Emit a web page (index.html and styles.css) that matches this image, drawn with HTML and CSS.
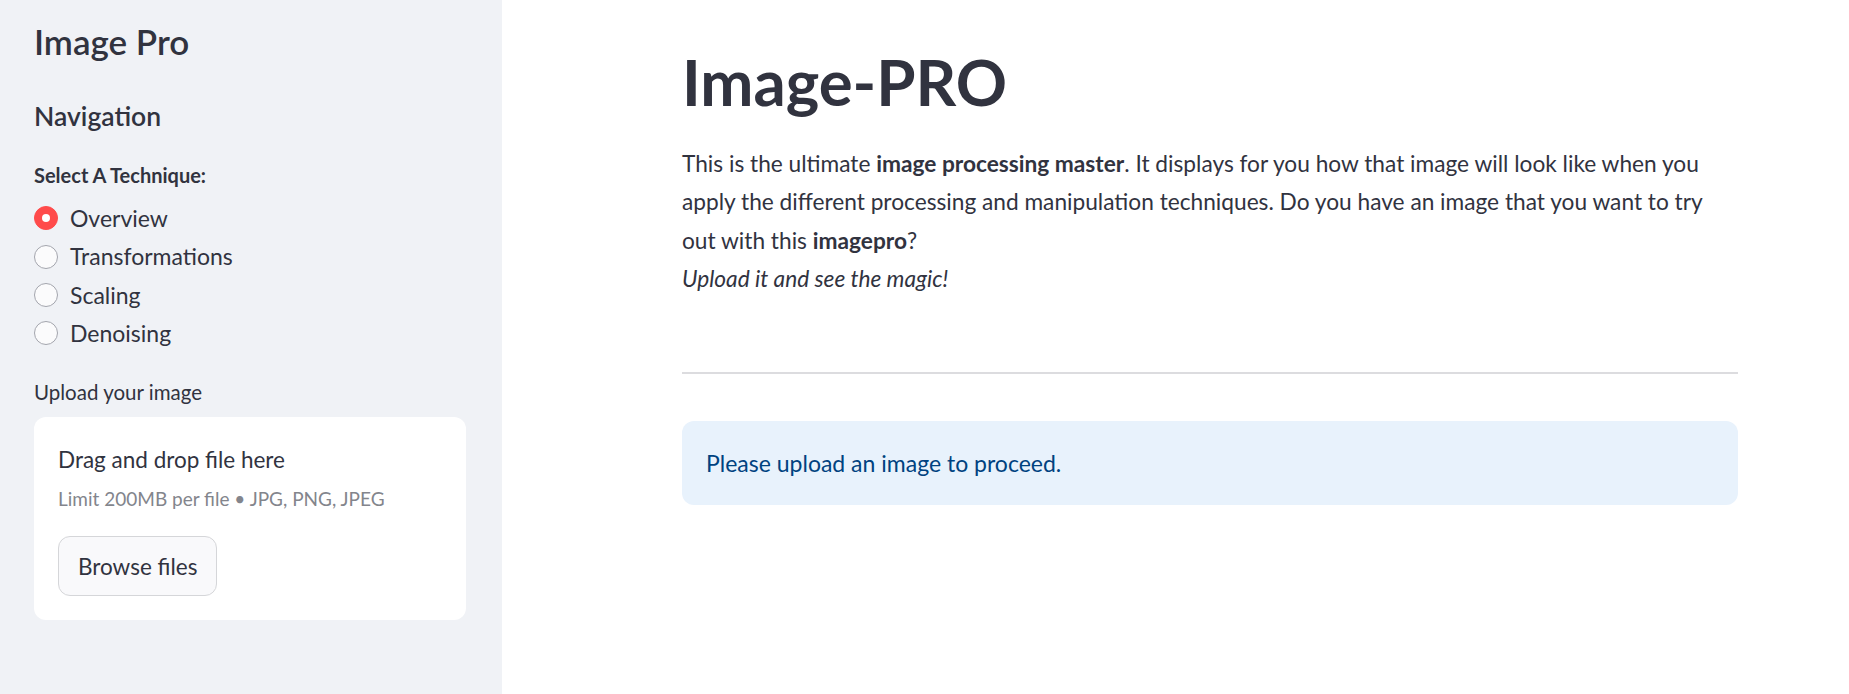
FILE: index.html
```html
<!DOCTYPE html>
<html lang="en">
<head>
<meta charset="utf-8">
<title>Image Pro</title>
<link rel="stylesheet" href="styles.css">
</head>
<body>
<div class="app">
  <aside class="sidebar">
    <h1 class="side-title">Image Pro</h1>
    <h2 class="side-header">Navigation</h2>
    <div class="field-label strong">Select A Technique:</div>
    <div class="radio-list">
      <label class="radio selected"><span class="dot"></span><span class="radio-text">Overview</span></label>
      <label class="radio"><span class="dot"></span><span class="radio-text">Transformations</span></label>
      <label class="radio"><span class="dot"></span><span class="radio-text">Scaling</span></label>
      <label class="radio"><span class="dot"></span><span class="radio-text">Denoising</span></label>
    </div>
    <div class="field-label upload-label">Upload your image</div>
    <section class="dropzone">
      <div class="drop-title">Drag and drop file here</div>
      <div class="drop-limit">Limit 200MB per file • JPG, PNG, JPEG</div>
      <button class="browse" type="button">Browse files</button>
    </section>
  </aside>
  <main class="main">
    <div class="block">
      <h1 class="page-title">Image-PRO</h1>
      <p class="intro">This is the ultimate <strong>image processing master</strong>. It displays for you how that image will look like when you apply the different processing and manipulation techniques. Do you have an image that you want to try out with this <strong>imagepro</strong>?<br><em>Upload it and see the magic!</em></p>
      <hr class="divider">
      <div class="info">Please upload an image to proceed.</div>
    </div>
  </main>
</div>
</body>
</html>
```

FILE: styles.css
```css
* { box-sizing: border-box; }
html, body { margin: 0; padding: 0; }
body {
  font-family: "Lato", "Liberation Sans", sans-serif;
  color: #31333f;
  background: #ffffff;
}
.app {
  display: flex;
  height: 100vh;
  overflow: hidden;
}
.sidebar {
  width: 502px;
  flex: 0 0 502px;
  background: #f0f2f6;
  padding: 21px 36px 0 34px;
  display: flex;
  flex-direction: column;
}
.side-title {
  margin: 0;
  font-size: 35px;
  line-height: 40px;
  font-weight: 600;
  color: #31333f;
}
.side-header {
  margin: 38px 0 0;
  font-size: 26.5px;
  line-height: 34px;
  font-weight: 600;
  color: #31333f;
}
.field-label {
  font-size: 20px;
  line-height: 26px;
  color: #31333f;
}
.field-label.strong {
  font-weight: 700;
  margin-top: 28.5px;
}
.radio-list {
  margin-top: 11.5px;
  display: flex;
  flex-direction: column;
}
.radio {
  display: flex;
  align-items: center;
  height: 38.4px;
  font-size: 23px;
  line-height: 38.4px;
  color: #31333f;
}
.dot {
  width: 24px;
  height: 24px;
  flex: 0 0 24px;
  border-radius: 50%;
  border: 1px solid #a3a5ad;
  background: #fbfbfc;
  margin-right: 12px;
  position: relative;
}
.radio.selected .dot {
  background: #ff4b4b;
  border-color: #ff4b4b;
}
.radio.selected .dot::after {
  content: "";
  position: absolute;
  left: 50%;
  top: 50%;
  width: 8px;
  height: 8px;
  margin: -4px 0 0 -4px;
  border-radius: 50%;
  background: #ffffff;
}
.upload-label {
  margin-top: 25.5px;
  font-size: 20.5px;
  line-height: 28px;
}
.dropzone {
  margin-top: 11px;
  background: #ffffff;
  border-radius: 12px;
  padding: 24px;
  display: flex;
  flex-direction: column;
  align-items: flex-start;
}
.drop-title {
  font-size: 22.5px;
  line-height: 37px;
  color: #31333f;
}
.drop-limit {
  margin-top: 6.5px;
  font-size: 19px;
  line-height: 28px;
  color: #83858c;
}
.browse {
  margin-top: 23.5px;
  height: 60px;
  padding: 0 19px;
  font-family: inherit;
  font-size: 22.5px;
  color: #31333f;
  background: #f9f9fb;
  border: 1px solid #d5d6d9;
  border-radius: 12px;
}
.main {
  flex: 1;
  padding: 46px 111px 0 180px;
}
.block {
  width: 100%;
}
.page-title {
  margin: 0;
  font-size: 63.5px;
  line-height: 72px;
  font-weight: 700;
  color: #31333f;
}
.intro {
  margin: 27px 0 0;
  font-size: 22.7px;
  line-height: 38.4px;
  color: #31333f;
}
.intro strong { font-weight: 700; }
.divider {
  margin: 73px 0 0;
  border: 0;
  border-top: 2px solid #dcdcdf;
  height: 0;
}
.info {
  margin-top: 47px;
  background: #e8f2fc;
  color: #004280;
  border-radius: 12px;
  padding: 24px;
  font-size: 23px;
  line-height: 36px;
}
```
